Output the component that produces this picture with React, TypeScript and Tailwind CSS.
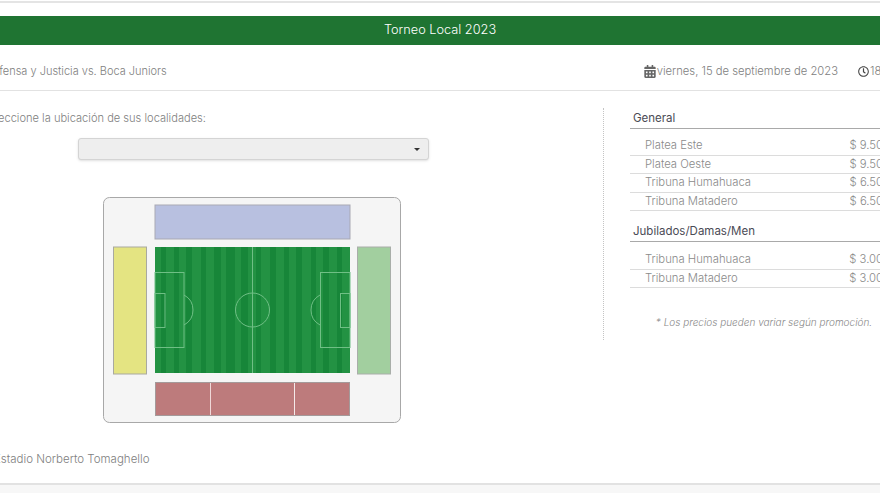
import React from 'react';
import { FaCalendarAlt, FaRegClock } from 'react-icons/fa';

const GENERAL = [
  { name: 'Platea Este', price: '$ 9.500' },
  { name: 'Platea Oeste', price: '$ 9.500' },
  { name: 'Tribuna Humahuaca', price: '$ 6.500' },
  { name: 'Tribuna Matadero', price: '$ 6.500' },
];

const JUBILADOS = [
  { name: 'Tribuna Humahuaca', price: '$ 3.000' },
  { name: 'Tribuna Matadero', price: '$ 3.000' },
];

// field stripes, widths are uneven in the original image
const STRIPES = [6, 5, 8, 5, 7, 6, 9, 5, 8, 7, 5, 9, 6, 7, 8, 5, 9, 6, 8, 5, 7, 6, 9, 5, 7, 6, 8, 5, 8];

function Stadium() {
  let x = 52;
  return (
    <svg width="298" height="226" viewBox="0 0 298 226" className="block">
      <rect x="0.5" y="0.5" width="297" height="225" rx="6" fill="#f5f5f5" stroke="#a8a8a8" />
      <rect x="52" y="8" width="195" height="34" fill="#b8c0e0" stroke="#a9a9b4" />
      <rect x="10.5" y="50" width="33" height="127" fill="#e4e482" stroke="#a9a9a0" />
      <rect x="254.5" y="50" width="33" height="127" fill="#a2cf9f" stroke="#a9aea9" />
      {STRIPES.map((w, i) => {
        const el = (
          <rect key={i} x={x} y="50" width={w} height="126" fill={i % 2 ? '#178639' : '#239243'} />
        );
        x += w;
        return el;
      })}
      <g fill="none" stroke="#6fbf85" strokeWidth="1">
        <line x1="149.5" y1="50" x2="149.5" y2="176" />
        <circle cx="149.5" cy="113" r="17" />
        <rect x="52" y="75.5" width="29" height="75" />
        <rect x="52" y="96.5" width="10" height="34" />
        <path d="M81 98a17 17 0 0 1 0 30" />
        <rect x="217.5" y="75.5" width="29.5" height="75" />
        <rect x="237.5" y="96.5" width="9.5" height="34" />
        <path d="M217 98a17 17 0 0 0 0 30" />
      </g>
      <rect x="52.5" y="185.5" width="194" height="33" fill="#bd7b7c" stroke="#a49a9a" />
      <line x1="107.5" y1="186" x2="107.5" y2="218" stroke="#f0d8d8" />
      <line x1="191.5" y1="186" x2="191.5" y2="218" stroke="#f5eaea" />
    </svg>
  );
}

function PriceGroup({ title, rows, gap }: { title: string; rows: { name: string; price: string }[]; gap: string }) {
  return (
    <div>
      <div className="h-[21px] pl-[3px] border-b border-[#a9a9a9] text-[11.5px] leading-[21px] text-[#4b4b55] font-normal">
        {title}
      </div>
      <div className={gap}>
        {rows.map(r => (
          <div key={r.name} className="h-[18.5px] flex justify-between pl-[15px] pr-[8px] border-b border-[#dcdcdc] text-[11.3px] leading-[17px] text-[#8a8a8a]">
            <span>{r.name}</span>
            <span>{r.price}</span>
          </div>
        ))}
      </div>
    </div>
  );
}

export default function App() {
  return (
    <div className="w-[880px] h-[493px] overflow-hidden bg-white font-['Inter',sans-serif] font-light">
      <div className="w-[920px] h-[493px] -ml-[20px] flex flex-col">
        <div className="h-[3px] border-b-2 border-[#e4e4e4]" />
        <div className="mt-[13px] h-[29px] bg-[#1f7432] text-white text-[12.75px] leading-[28px] text-center">
          Torneo Local 2023
        </div>

        <div className="h-[46px] flex items-center justify-between pl-[5px] pt-[8px] border-b border-[#e2e2e2] text-[11px] text-[#808080]">
          <span>Defensa y Justicia vs. Boca Juniors</span>
          <div className="flex items-center">
            <FaCalendarAlt className="w-[12px] h-[13px] text-[#666]" />
            <span className="ml-[1px] text-[11.25px]">viernes, 15 de septiembre de 2023</span>
            <FaRegClock className="ml-[20px] w-[11px] h-[11px] text-[#444]" />
            <span className="ml-[1px] w-[30px] text-[11.25px]">18:00</span>
          </div>
        </div>

        <div className="flex-1 flex pt-[17px]">
          <div className="w-[623px] pl-[2px]">
            <div className="h-5 text-[11.1px] leading-5 text-[#808080]">Seleccione la ubicación de sus localidades:</div>
            <div className="mt-[10px] ml-[96px] w-[351px] h-[22px] bg-[#eeeeee] border border-[#d4d4d4] rounded-[3px] flex items-center justify-end pr-[8px] shadow-sm">
              <div className="border-x-[3px] border-x-transparent border-t-[3px] border-t-[#333]" />
            </div>
            <div className="mt-[37px] ml-[121px]">
              <Stadium />
            </div>
            <div className="mt-[26px] ml-[12px] h-5 text-[11.5px] leading-5 text-[#808080]">Estadio Norberto Tomaghello</div>
          </div>

          <div className="w-[297px] h-[232px] border-l border-dotted border-[#c4c4c4] pl-[26px]">
            <div className="w-[268px]">
              <PriceGroup title="General" rows={GENERAL} gap="pt-[8px]" />
              <div className="mt-[10px]">
                <PriceGroup title="Jubilados/Damas/Men" rows={JUBILADOS} gap="pt-[9px]" />
              </div>
              <div className="mt-[24px] h-5 text-[10px] leading-5 italic text-center text-[#8a8a8a]">
                * Los precios pueden variar según promoción.
              </div>
            </div>
          </div>
        </div>

        <div className="h-[10px] border-t-2 border-[#e2e2e2] bg-[#f7f7f7]" />
      </div>
    </div>
  );
}
